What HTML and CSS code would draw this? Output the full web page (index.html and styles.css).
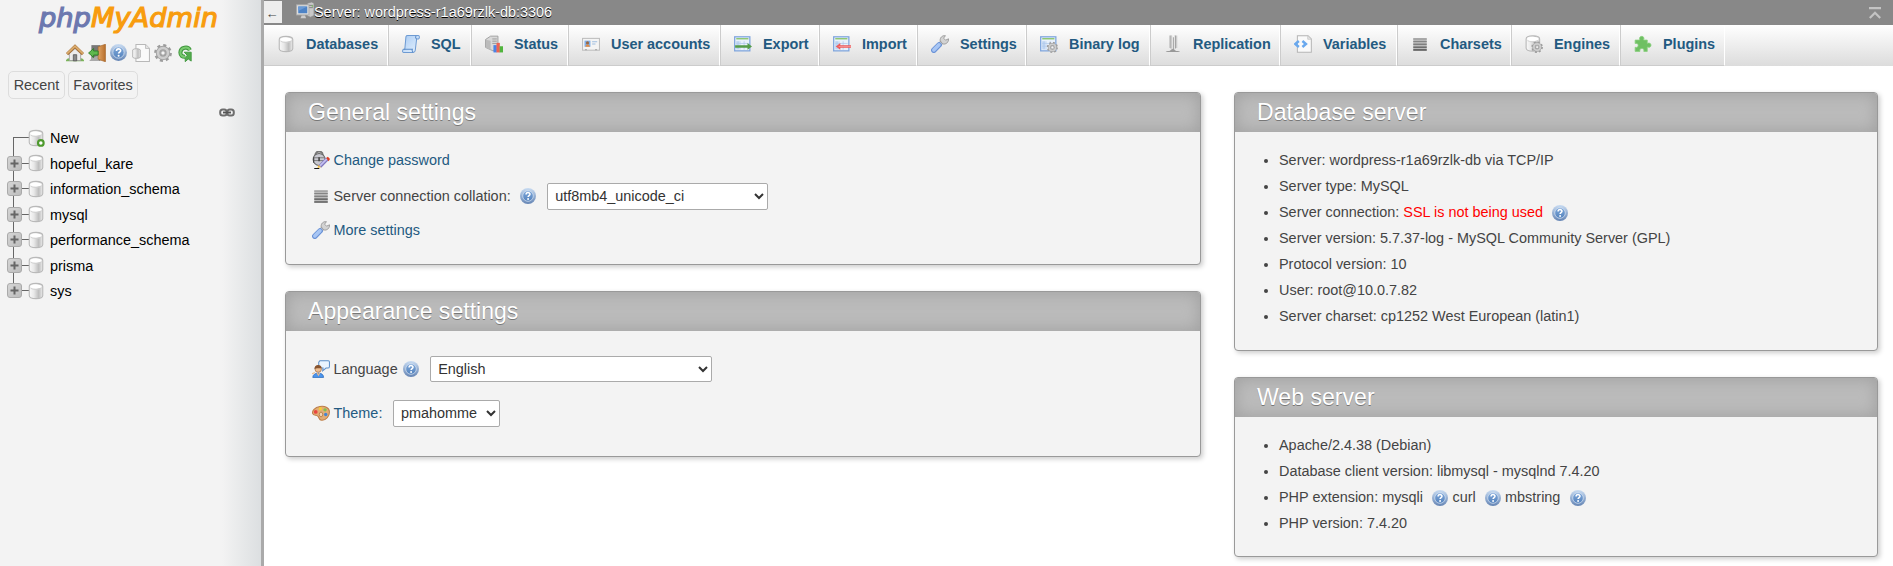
FILE: index.html
```html
<!DOCTYPE html>
<html lang="en">
<head>
<meta charset="utf-8">
<title>phpMyAdmin</title>
<link rel="stylesheet" href="styles.css">
</head>
<body>
<svg class="sprite" width="0" height="0">
  <defs>
    <linearGradient id="g-db" x1="0" x2="1" y1="0" y2="0"><stop offset="0" stop-color="#fafafa"/><stop offset=".35" stop-color="#e8e8e8"/><stop offset=".7" stop-color="#bdbdbd"/><stop offset="1" stop-color="#eee"/></linearGradient>
    <linearGradient id="g-help" x1="0" x2="0" y1="0" y2="1"><stop offset="0" stop-color="#c9dcf2"/><stop offset="1" stop-color="#6484b4"/></linearGradient>
    <linearGradient id="g-helpin" x1="0" x2="0" y1="0" y2="1"><stop offset="0" stop-color="#7fa8da"/><stop offset="1" stop-color="#5583bd"/></linearGradient>
    <linearGradient id="g-plus" x1="0" x2="1" y1="0" y2="1"><stop offset="0" stop-color="#d6d6d6"/><stop offset="1" stop-color="#bcbcbc"/></linearGradient>
    <linearGradient id="g-sql" x1="0" x2="1" y1="0" y2="1"><stop offset="0" stop-color="#a9cbf3"/><stop offset="1" stop-color="#e6f2fe"/></linearGradient>
    <linearGradient id="g-door" x1="0" x2="1" y1="0" y2="0"><stop offset="0" stop-color="#e0a464"/><stop offset="1" stop-color="#b86f2c"/></linearGradient>

    <symbol id="db" viewBox="0 0 16 16"><path d="M2 4c0-2 2.400-2.800 6-2.800S14 2 14 4v8c0 2-2.400 2.800-6 2.800S2 14 2 12z" fill="url(#g-db)" stroke="#b9b9b9"/><ellipse cx="8" cy="4" rx="5" ry="2" fill="#fff"/><path d="M3.200 5.500C5 7 11 7 12.800 5.500" fill="none" stroke="#d0d0d0" stroke-width=".8"/></symbol>
    <symbol id="newdb" viewBox="0 0 16 16"><use href="#db"/><circle cx="12.300" cy="12.400" r="2.500" fill="#fff" stroke="#4e9a2e" stroke-width="1.900"/></symbol>
    <symbol id="plus" viewBox="0 0 15 15"><rect x=".5" y=".5" width="14" height="14" rx="2.500" fill="url(#g-plus)" stroke="#aaa"/><path d="M7.500 3.500v8M3.500 7.500h8" stroke="#666" stroke-width="2"/></symbol>
    <symbol id="help" viewBox="0 0 16 16"><circle cx="8" cy="8" r="8" fill="url(#g-help)"/><circle cx="8" cy="8" r="5.300" fill="url(#g-helpin)" stroke="#dbe7f5" stroke-width=".7"/><path d="M6.100 6.600c0-2.700 3.900-2.500 3.900-.3 0 1.300-1.900 1.400-1.900 2.700" fill="none" stroke="#fff" stroke-width="1.500"/><circle cx="8.100" cy="11" r=".95" fill="#fff"/></symbol>
    <symbol id="home" viewBox="0 0 16 16"><path d="M0 14.500c1-2 3-2.500 4-1h8c1-1.500 3-1 4 1v.9H0z" fill="#7cb45c"/><path d="M3 8.500L8 4l5 4.500v6.200H3z" fill="#ececec" stroke="#999" stroke-width=".7"/><path d="M.9 9L8 2.200 15.100 9" stroke="#a66d32" stroke-width="2.800" fill="none"/><path d="M1 8.500L8 1.900l7 6.600" stroke="#dcae70" stroke-width="1.500" fill="none"/><path d="M6.500 15V9.500h3V15z" fill="#888" stroke="#555" stroke-width=".7"/></symbol>
    <symbol id="exit" viewBox="0 0 16 16"><path d="M3 1h8v14H3z" fill="#777"/><path d="M4 12l6-2v5H1z" fill="#aaa"/><path d="M9 2.500L15.500.2v15.600L9 13.500z" fill="url(#g-door)" stroke="#a5652a" stroke-width=".6"/><path d="M.5 8L5 4v2.200h4v3.600H5V12z" fill="#5fb84e" stroke="#2c7d26" stroke-width=".8"/></symbol>
    <symbol id="doc" viewBox="0 0 16 16"><path d="M3.500.5h8.500L15.500 4v11.500h-12z" fill="#fafafa" stroke="#b8b8b8" stroke-width=".9"/><path d="M12 .5V4h3.500" fill="#e2e2e2" stroke="#b8b8b8" stroke-width=".7"/><path d="M.6 5.200c1.100-1.400 5.700-1.400 6.800 0v6.600c-1 1.300-5.800 1.300-6.800 0z" fill="url(#g-db)" stroke="#b0b0b0" stroke-width=".8"/></symbol>
    <symbol id="gear" viewBox="0 0 16 16"><circle cx="8" cy="8" r="6.300" fill="none" stroke="#9c9c9c" stroke-width="3.200" stroke-dasharray="2.500 2.448"/><circle cx="8" cy="8" r="4.300" fill="none" stroke="#a2a2a2" stroke-width="4.200"/><circle cx="8" cy="8" r="4.400" fill="none" stroke="#cdcdcd" stroke-width="2.300"/><circle cx="8" cy="8" r="2" fill="#f4f4f4" stroke="#909090" stroke-width=".8"/></symbol>
    <symbol id="reload" viewBox="0 0 16 16"><path d="M12.300 5.400C10.800 2 4 2.500 3.900 7.700c0 2.500 1.800 3.900 4.300 3.700" fill="none" stroke="#3f963d" stroke-width="3.600"/><path d="M7.300 7.300h6.200v7.900L10.900 13.300 8.200 15.700 8.200 12 10 10z" fill="#54ad4d" stroke="#3f963d" stroke-width=".8"/><path d="M12.300 5.400C10.800 2 4 2.500 3.900 7.700c0 2.500 1.800 3.900 4.300 3.700" fill="none" stroke="#7acb70" stroke-width="1.800"/></symbol>
    <symbol id="link" viewBox="0 0 16 9"><g fill="none" stroke="#6d6d6d" stroke-width="2"><rect x="1.200" y="1.500" width="6.500" height="6" rx="2.500"/><rect x="8.300" y="1.500" width="6.500" height="6" rx="2.500"/></g><path d="M4 4.500h8" stroke="#555" stroke-width="1.900"/></symbol>
    <symbol id="server" viewBox="0 0 16 16"><path d="M10 1l4-1 2 1v11l-3 1.500-3-1z" fill="#c8c8c8" stroke="#888" stroke-width=".6"/><path d="M11 3h4M11 5h4" stroke="#7d7d7d" stroke-width=".8"/><rect x="14" y="3" width="1.200" height="1.200" fill="#76c35c"/><rect x=".5" y="2.500" width="11" height="9" fill="#ddd" stroke="#aaa" stroke-width=".8"/><rect x="2" y="4" width="8" height="6" fill="#4d83c6"/><path d="M2 4h8L2 8z" fill="#6b9bd6"/><path d="M5 12h3l1 2.500H4z" fill="#ccc"/></symbol>
    <symbol id="sql" viewBox="0 0 16 16"><path d="M3.500 1.500c.3-.8.700-1 1.500-1h9.500c1.200 0 1.300 2.300.2 3H13l-1.200 10c-.2 1.500-.8 2-1.800 2H1.500c-1.400 0-1.300-2.500 0-2.800h1z" fill="url(#g-sql)" stroke="#6d9ad2" stroke-width=".9"/><path d="M12.600 1c-.8.600-.7 1.800.4 2.500M1.500 12.700h7.700c-.5 1 .1 2.400.8 2.700" fill="none" stroke="#5a8ac8" stroke-width=".9"/></symbol>
    <symbol id="status" viewBox="0 0 16 16"><path d="M.5 4L5 1h6.500v12L7 14 .5 11z" fill="#d9d9d9" stroke="#9b9b9b" stroke-width=".8"/><path d="M.8 4.200L5 5v8.500L.8 11z" fill="#bbb"/><path d="M6.500 3.500h4M6.500 5.500h4M6.500 7.500h4" stroke="#999" stroke-width=".8"/><path d="M7.500 9h3v6.500h-3z" fill="#4b83e4"/><path d="M10.200 7h3v8.500h-3z" fill="#ee6253"/><path d="M13 10h3v5.500h-3z" fill="#50b43d"/></symbol>
    <symbol id="users" viewBox="0 0 16 16"><rect x=".5" y="3" width="15" height="10.500" fill="#f4f4f4" stroke="#bbb" stroke-width=".9"/><rect x="2.200" y="5" width="5.300" height="5.500" fill="#80b0e8"/><circle cx="4.900" cy="7" r="1.400" fill="#9b6844"/><path d="M3 10.500c.5-2.600 3.600-2.600 4 0z" fill="#e88b3d"/><path d="M9 6h4.500M9 8h3" stroke="#9ebde0" stroke-width="1.100"/><path d="M2.500 13.500c0-1.300 2-1.300 2 0zm9 0c0-1.300 2-1.300 2 0z" fill="#aaa"/></symbol>
    <symbol id="table" viewBox="0 0 16 16"><rect x=".6" y="1.600" width="13.500" height="12.500" fill="#e9f1fb" stroke="#7da4dc" stroke-width="1.100"/><path d="M2 3.300h10.800" stroke="#8fc774" stroke-width="1.300"/><path d="M2 5.500h2.500v7.300H2z" fill="#bcd3f1"/><path d="M5.300 5.500v7.500M9 5.500v7.500M2 7.500h11M2 10h11" stroke="#b3cbea" stroke-width=".7"/></symbol>
    <symbol id="export" viewBox="0 0 16 16"><use href="#table"/><path d="M1 9h11V7.200l4 3-4 3v-1.800H1z" fill="#559d48"/></symbol>
    <symbol id="import" viewBox="0 0 16 16"><use href="#table"/><path d="M2.500 10.200l4-3V9H16v2.400H6.500v1.800z" fill="#ee5a5a"/><path d="M5 10.200h11" stroke="#fa9c9c" stroke-width=".7"/></symbol>
    <symbol id="wrench" viewBox="0 0 16 16"><path d="M7.500 8.500l3-3" stroke="#999" stroke-width="3.500"/><path d="M7.500 8.500l3-3" stroke="#d6d6d6" stroke-width="2"/><path d="M8.200 5.200C7.700 2.500 10 .2 12.800.6l-1.600 2.200 1.700 1.800 2.700-1.200c.2 3-2.400 5.400-5.200 4.500z" fill="#d3d3d3" stroke="#999" stroke-width=".8"/><path d="M2.500 13.500l4.700-4.700" stroke="#6b93d7" stroke-width="4.900" stroke-linecap="round"/><path d="M2.500 13.300l4.600-4.600" stroke="#a8c6f4" stroke-width="3.100" stroke-linecap="round"/></symbol>
    <symbol id="tablegear" viewBox="0 0 16 16"><use href="#table"/><use href="#gear" x="6" y="6" width="10" height="10"/></symbol>
    <symbol id="repl" viewBox="0 0 16 16"><path d="M5.300.5v11M11 .5v11" stroke="#ccc" stroke-width="1.600"/><path d="M6.300.5V12M8.300 2v11M10 .5V12" stroke="#999" stroke-width="1"/><path d="M7.200.5V12M9.200 .5V12" stroke="#e6e6e6" stroke-width=".9"/><path d="M1.500 15c1-1.300 3-.3 4.300-1.500 1.400-1.300 3-1.300 4 0 1.200 1.200 3.500.2 4.500 1.500z" fill="#999"/></symbol>
    <symbol id="vars" viewBox="0 0 16 16"><path d="M3 .6h9.500l2.900 3v11.800H3z" fill="#fafafa" stroke="#b5b5b5" stroke-width=".9"/><path d="M12.200.8v3h3" fill="#e5e5e5" stroke="#c6c6c6" stroke-width=".7"/><path d="M4.300 5.300L1.200 8l3.100 2.700M7.500 5.300L10.600 8l-3.100 2.700" fill="none" stroke="#69a8ee" stroke-width="2.200"/></symbol>
    <symbol id="lines" viewBox="0 0 16 16"><path d="M2 3h12v11H2z" fill="#bbb"/><path d="M2 3.500h12" stroke="#929292"/><path d="M2 5.800h12" stroke="#858585"/><path d="M2 8.200h12" stroke="#707070"/><path d="M2 10.800h12" stroke="#505050"/><path d="M2 13.300h12" stroke="#303030"/></symbol>
    <symbol id="engine" viewBox="0 0 16 16"><use href="#db" x="-1" y="-.5"/><use href="#gear" x="5.500" y="5.500" width="10.500" height="10.500"/></symbol>
    <symbol id="puzzle" viewBox="0 0 16 16"><path d="M1 4.500h4.200c-.9-2 .2-3.300 1.700-3.300s2.500 1.300 1.600 3.300h3.300v3c2-.8 3.300 0 3.300 1.600s-1.300 2.300-3.300 1.500v4H8.700c.5-2-.4-2.600-1.700-2.600s-2.200.6-1.700 2.600H1v-3.700c1.900.5 2.700-.4 2.700-1.700S2.800 7.100 1 7.600z" fill="#6fc063" stroke="#8bd07f" stroke-width=".7"/></symbol>
    <symbol id="pass" viewBox="0 0 16 16"><path d="M3 5V3.500c0-4 6.500-4 6.500 0V5" fill="none" stroke="#777" stroke-width="1.700"/><circle cx="6.300" cy="7.500" r="5.300" fill="#c9c9d1" stroke="#666" stroke-width=".9"/><path d="M1 6h10.500M1 8.500h10.500" stroke="#777" stroke-width=".8"/><path d="M6.300 5.500v3.500" stroke="#444" stroke-width="1.400"/><path d="M1.500 5.500v5" stroke="#444" stroke-width="1"/><path d="M7 13.700L13.500 7" stroke="#8077bd" stroke-width="3.200"/><path d="M7 13.300L13.200 6.900" stroke="#c3bff0" stroke-width="1.600"/><path d="M12.600 6.200l1.500-1L16 7l-1.200 2z" fill="#dd3b22"/><path d="M5.800 12.500l2.300 2-3.300.7z" fill="#f0bd45"/><path d="M2 15.500h4.500" stroke="#111" stroke-width="1"/></symbol>
    <symbol id="lang" viewBox="0 0 16 16"><path d="M7 .7h7.500c1 0 1 .5 1 1v4c0 1-.5 1.500-1.500 1.500h-1.500L9.500 9.700l.3-2.500H8c-1.500 0-2-.5-2-1.500V2z" fill="#eaf4ff" stroke="#5c8ec8" stroke-width=".9"/><path d="M.7 15.500c0-5 9.600-5.500 9.600 0z" fill="#4b95ee" stroke="#2f6dbd" stroke-width=".7"/><circle cx="5.500" cy="8" r="2.900" fill="#edbd91" stroke="#9b6843" stroke-width=".6"/><path d="M2.200 8c-.2-5 6.500-4.500 6.300-.8C6 7.800 4.300 6.500 2.200 8z" fill="#86532f"/><path d="M0 12.300l2.500-1.100M4.500 11.300l1.200 2.200 1.200-2.200" stroke="#efba86" stroke-width="1" fill="none"/></symbol>
    <symbol id="palette" viewBox="0 0 16 16"><path d="M15.500 7c0-4-4.500-5.500-8.500-4.800C2.500 3-.2 6 .6 8.500c.7 2.200 3.300.8 4.600 2.300 1.400 1.500.8 3.700 3.600 3.700 3.800 0 6.700-3.500 6.700-7.500z" fill="#e2ac76" stroke="#bd7e48" stroke-width=".9"/><circle cx="3.300" cy="7" r="1.700" fill="#e9453f"/><circle cx="7.500" cy="4.200" r="1.600" fill="#f5ca3a"/><circle cx="11.600" cy="5.200" r="1.500" fill="#7ec052"/><circle cx="12.200" cy="9.300" r="1.500" fill="#4785cf"/><ellipse cx="8" cy="9.300" rx="1.500" ry="2.100" fill="#f3d4b3" stroke="#ad743e" stroke-width=".7"/></symbol>
  </defs>
</svg>

<div class="app">
  <aside class="sidebar">
    <svg class="logo" width="210" height="38"><text x="4" y="27" textLength="179" lengthAdjust="spacingAndGlyphs"><tspan class="logo-php">php</tspan><tspan class="logo-my">MyAdmin</tspan></text></svg>
    <nav class="quick">
      <svg><use href="#home"/></svg><svg><use href="#exit"/></svg><svg class="q-help"><use href="#help"/></svg><svg><use href="#doc"/></svg><svg><use href="#gear"/></svg><svg><use href="#reload"/></svg>
    </nav>
    <div class="recents"><span class="pill pill-recent">Recent</span><span class="pill pill-fav">Favorites</span></div>
    <div class="linker"><svg width="16" height="9"><use href="#link"/></svg></div>
    <ul class="tree">
      <li class="tree-new"><span class="stem"></span><svg class="ico"><use href="#newdb"/></svg><a>New</a></li>
      <li><svg class="exp"><use href="#plus"/></svg><svg class="ico"><use href="#db"/></svg><a>hopeful_kare</a></li>
      <li><svg class="exp"><use href="#plus"/></svg><svg class="ico"><use href="#db"/></svg><a>information_schema</a></li>
      <li><svg class="exp"><use href="#plus"/></svg><svg class="ico"><use href="#db"/></svg><a>mysql</a></li>
      <li><svg class="exp"><use href="#plus"/></svg><svg class="ico"><use href="#db"/></svg><a>performance_schema</a></li>
      <li><svg class="exp"><use href="#plus"/></svg><svg class="ico"><use href="#db"/></svg><a>prisma</a></li>
      <li><svg class="exp"><use href="#plus"/></svg><svg class="ico"><use href="#db"/></svg><a>sys</a></li>
    </ul>
  </aside>
  <div class="resizer"></div>
  <main class="main">
    <header class="crumbs">
      <span class="back">←</span>
      <svg class="ico crumb-ico"><use href="#server"/></svg>
      <span class="crumb">Server: wordpress-r1a69rzlk-db:3306</span>
      <svg class="totop" width="12" height="12" viewBox="0 0 12 12"><path d="M0 1.200h12M.8 11L6 5.800l5.200 5.200" fill="none" stroke="#c4c4c4" stroke-width="2.200"/></svg>
    </header>
    <ul class="tabs">
      <li><svg class="ico"><use href="#db"/></svg><a>Databases</a></li>
      <li><svg class="ico"><use href="#sql"/></svg><a>SQL</a></li>
      <li><svg class="ico"><use href="#status"/></svg><a>Status</a></li>
      <li><svg class="ico"><use href="#users"/></svg><a>User accounts</a></li>
      <li><svg class="ico"><use href="#export"/></svg><a>Export</a></li>
      <li><svg class="ico"><use href="#import"/></svg><a>Import</a></li>
      <li><svg class="ico"><use href="#wrench"/></svg><a>Settings</a></li>
      <li><svg class="ico"><use href="#tablegear"/></svg><a>Binary log</a></li>
      <li><svg class="ico"><use href="#repl"/></svg><a>Replication</a></li>
      <li><svg class="ico"><use href="#vars"/></svg><a>Variables</a></li>
      <li><svg class="ico"><use href="#lines"/></svg><a>Charsets</a></li>
      <li><svg class="ico"><use href="#engine"/></svg><a>Engines</a></li>
      <li><svg class="ico"><use href="#puzzle"/></svg><a>Plugins</a></li>
    </ul>
    <div class="columns">
      <div class="col">
        <section class="card general">
          <h2>General settings</h2>
          <div class="rows">
            <div class="row r-pass"><svg class="ico"><use href="#pass"/></svg><a>Change password</a></div>
            <div class="row r-coll"><svg class="ico"><use href="#lines"/></svg><label>Server connection collation:</label><svg class="help"><use href="#help"/></svg><select class="s-coll"><option>utf8mb4_unicode_ci</option></select></div>
            <div class="row r-more"><svg class="ico"><use href="#wrench"/></svg><a>More settings</a></div>
          </div>
        </section>
        <section class="card appearance">
          <h2>Appearance settings</h2>
          <div class="rows">
            <div class="row r-lang"><svg class="ico"><use href="#lang"/></svg><label>Language</label><svg class="help"><use href="#help"/></svg><select class="s-lang"><option>English</option></select></div>
            <div class="row r-theme"><svg class="ico"><use href="#palette"/></svg><a>Theme:</a><select class="s-theme"><option>pmahomme</option></select></div>
          </div>
        </section>
      </div>
      <div class="col">
        <section class="card database">
          <h2>Database server</h2>
          <ul class="facts">
            <li>Server: wordpress-r1a69rzlk-db via TCP/IP</li>
            <li>Server type: MySQL</li>
            <li>Server connection: <span class="warn">SSL is not being used</span> <svg class="help"><use href="#help"/></svg></li>
            <li>Server version: 5.7.37-log - MySQL Community Server (GPL)</li>
            <li>Protocol version: 10</li>
            <li>User: root@10.0.7.82</li>
            <li>Server charset: cp1252 West European (latin1)</li>
          </ul>
        </section>
        <section class="card web">
          <h2>Web server</h2>
          <ul class="facts">
            <li>Apache/2.4.38 (Debian)</li>
            <li>Database client version: libmysql - mysqlnd 7.4.20</li>
            <li>PHP extension: mysqli <svg class="help"><use href="#help"/></svg> curl <svg class="help"><use href="#help"/></svg> mbstring <svg class="help"><use href="#help"/></svg></li>
            <li>PHP version: 7.4.20</li>
          </ul>
        </section>
      </div>
    </div>
  </main>
</div>
</body>
</html>
```
FILE: styles.css
```css
* { box-sizing: border-box; }
body { margin: 0; font: 14.43px/26px "Liberation Sans", Arial, sans-serif; color: #444; background: #fff; overflow: hidden; }
ul { list-style: none; margin: 0; padding: 0; }
a { color: #235a81; }
svg { flex: none; }
.sprite { position: absolute; }
.ico { width: 18px; height: 18px; }
.help { width: 16px; height: 16px; }
.app { display: flex; height: 566px; }

.sidebar { width: 261px; flex: none; background: linear-gradient(to right, #f3f3f3 222px, #dcdfe1 261px); }
.resizer { width: 3px; flex: none; background: #aaa; }
.logo { display: block; margin-left: 35px; overflow: visible; font: italic 26px "DejaVu Sans", sans-serif; stroke-width: 1.2px; }
.logo-php { fill: #6c78af; stroke: #6c78af; }
.logo-my { fill: #f89c0e; stroke: #f89c0e; }
.quick { display: flex; gap: 4px; padding: 6px 0 0 66px; height: 33px; }
.quick svg { width: 18px; height: 18px; }
.quick .q-help { width: 17px; height: 17px; margin-right: 1px; }
.recents { display: flex; gap: 3px; padding-left: 8px; }
.pill { height: 28px; border: 1px solid #ddd; border-radius: 5px; text-align: center; line-height: 26px; }
.pill-recent { width: 57px; }
.pill-fav { width: 70px; }
.linker { display: flex; padding: 9px 0 0 219px; height: 26px; }

.tree li { display: flex; align-items: center; height: 25.5px; padding-left: 7px; background: linear-gradient(#666, #666) 13px 0 / 1px 100% no-repeat, linear-gradient(#666, #666) 22px 12px / 7px 1px no-repeat; }
.tree .exp { width: 15px; height: 15px; margin-right: 5px; }
.tree a { color: #000; margin-left: 5px; padding-top: 1px; }
.tree .tree-new { background: linear-gradient(#666, #666) 13px 12px / 1px 14px no-repeat, linear-gradient(#666, #666) 13px 12px / 16px 1px no-repeat; }
.stem { width: 20px; }
.tree li:last-child { background: linear-gradient(#666, #666) 13px 0 / 1px 10px no-repeat, linear-gradient(#666, #666) 22px 12px / 7px 1px no-repeat; }

.main { flex: 1; min-width: 0; }
.crumbs { display: flex; height: 25px; background: #888; padding-top: 1px; }
.back { width: 18px; height: 22px; background: #eee; color: #444; font-size: 13px; line-height: 26px; text-align: center; padding-right: 2px; }
.crumb-ico { margin: 1px 0 0 14px; }
.crumb { color: #fff; text-shadow: 0 1px 0 #000; line-height: 22px; }
.totop { margin: 6px 12px 0 auto; }

.tabs { display: grid; grid-template-columns: 124px 83px 97px 152px 99px 98px 109px 124px 130px 117px 114px 109px 105px; height: 41px; background: linear-gradient(#fff, #dcdcdc); }
.tabs li { display: flex; border-left: 1px solid #ccc; border-right: 1px solid #fff; border-bottom: 1px solid #ccc; padding: 10px 0 0 13px; }
.tabs li:first-child { border-left: 0; }
.tabs a { font-weight: bold; margin-left: 11px; line-height: 18px; white-space: nowrap; }

.columns { display: grid; grid-template-columns: 916px 644px; column-gap: 33px; padding: 26px 0 0 21px; align-items: start; }
.col { display: grid; gap: 26px; }
.card { border: 1px solid #999; border-radius: 4px; background: #f3f3f3; box-shadow: 2px 2px 5px #ccc; overflow: hidden; }
.general { height: 173px; }
.appearance { height: 166px; }
.database { height: 259px; }
.web { height: 180px; }
.card h2 { margin: 0; height: 39px; padding-left: 22px; background: #bbb; box-shadow: inset 0 0 15px 1px #a0a0a0; color: #fff; text-shadow: 0 1px 0 #777; font-size: 23.09px; font-weight: normal; line-height: 38px; }

.rows { padding-left: 26px; }
.row { display: flex; align-items: center; height: 26px; }
.row a, .row label { margin-left: 3.5px; }
.row select { font: inherit; color: #333; background: #fff; border: 1px solid #aaa; border-radius: 2px; padding: 0 3px; height: 27px; }
.r-pass { margin-top: 15px; }
.r-coll { margin-top: 10px; }
.r-more { margin-top: 8px; }
.r-coll .help { margin-left: 9.5px; }
.row .s-coll { margin-left: 11px; width: 221px; }
.r-lang { margin-top: 25px; }
.r-lang .help { margin-left: 5.5px; }
.row .s-lang { margin-left: 11px; width: 282px; height: 26px; }
.r-theme { margin-top: 18px; }
.row .s-theme { margin-left: 10.5px; width: 107px; }

.facts { list-style: disc; padding: 15px 0 0 44px; }
.facts li { height: 26px; }
.facts .help { vertical-align: -4px; margin-left: 5.4px; }
.warn { color: #f00; }
```
